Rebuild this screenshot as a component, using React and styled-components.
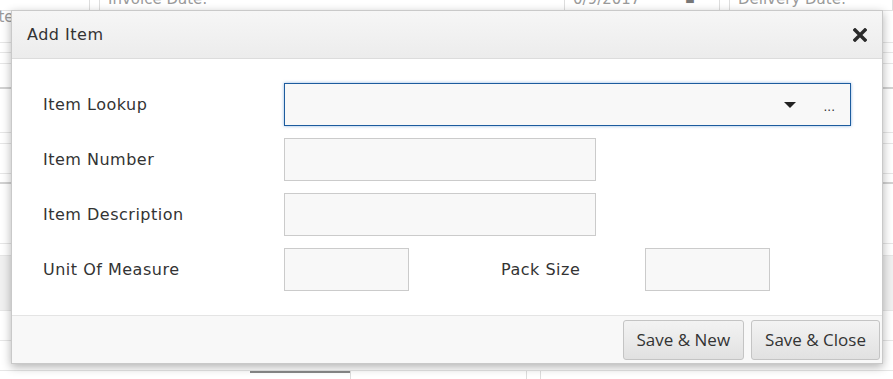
import React from 'react';
import styled, { createGlobalStyle } from 'styled-components';

const GlobalStyle = createGlobalStyle`
    html, body {
        margin: 0;
        padding: 0;
        background: #fff;
        overflow: hidden;
    }
    body {
        font-family: "DejaVu Sans", Verdana, sans-serif;
    }
`;

const bgRows = [
    { h: 32 }, { h: 10 }, { h: 11 }, { h: 25, dark: true }, { h: 44 }, { h: 11 },
    { h: 30 }, { h: 10, dark: true }, { h: 60 }, { h: 12 }, { h: 55, fill: true },
    { h: 30 }, { h: 30 },
];

const App = () => {
    return (
        <Screen>
            <GlobalStyle />
            <Page>
                <TopStrip>
                    <StripCell w={90} low>Item:</StripCell>
                    <StripCell w={10} />
                    <StripCell w={465} pad>Invoice Date:</StripCell>
                    <StripCell w={155} pad>0/9/2017 <Arrow>▬</Arrow></StripCell>
                    <StripCell w={10} />
                    <StripCell grow pad>Delivery Date:</StripCell>
                </TopStrip>
                <BgGrid>
                    {bgRows.map((r, i) => (
                        <BgRow key={i} h={r.h} dark={r.dark} fill={r.fill} />
                    ))}
                </BgGrid>
                <BottomStrip>
                    <BottomCell w={250} />
                    <BottomCell w={100} line />
                    <BottomCell w={175} sep />
                    <BottomCell w={13} sep />
                    <BottomCell grow sep />
                </BottomStrip>
            </Page>

            <Modal>
                <Header>
                    <Title>Add Item</Title>
                    <CloseButton aria-label="Close">
                        <svg width="14" height="14" viewBox="0 0 14 14">
                            <path d="M2 2 L12 12 M12 2 L2 12" stroke="#2b2b2b" strokeWidth="3.4" strokeLinecap="square" />
                        </svg>
                    </CloseButton>
                </Header>

                <Body>
                    <Label>Item Lookup</Label>
                    <Combo>
                        <Caret />
                        <Dots>...</Dots>
                    </Combo>

                    <Label>Item Number</Label>
                    <Field w={312} />

                    <Label>Item Description</Label>
                    <Field w={312} />

                    <Label>Unit Of Measure</Label>
                    <SplitRow>
                        <Field w={125} />
                        <SideLabel>Pack Size</SideLabel>
                        <Field w={125} />
                    </SplitRow>
                </Body>

                <Footer>
                    <Button>Save &amp; New</Button>
                    <Button>Save &amp; Close</Button>
                </Footer>
            </Modal>
        </Screen>
    );
};

const Screen = styled.div`
    position: relative;
    width: 893px;
    height: 379px;
    overflow: hidden;
    background: #fff;
`;

const Page = styled.div`
    display: flex;
    flex-direction: column;
    margin-top: -12px;
`;

const TopStrip = styled.div`
    display: flex;
    height: 22px;
    border-bottom: 1px solid #e2e2e2;
`;

const StripCell = styled.div`
    width: ${p => (p.w ? p.w + 'px' : 'auto')};
    flex: ${p => (p.grow ? 1 : 'none')};
    border-right: 1px solid #ddd;
    padding-left: ${p => (p.pad ? '8px' : '0')};
    text-indent: ${p => (p.low ? '-6px' : '0')};
    padding-top: ${p => (p.low ? '18px' : '0')};
    box-sizing: border-box;
    font-size: 15px;
    color: #9a9a9a;
    line-height: 22px;
    white-space: nowrap;
    overflow: ${p => (p.low ? 'visible' : 'hidden')};
`;

const Arrow = styled.span`
    margin-left: 40px;
    font-size: 10px;
    color: #777;
`;

const BgGrid = styled.div`
    display: flex;
    flex-direction: column;
`;

const BgRow = styled.div`
    height: ${p => p.h}px;
    box-sizing: border-box;
    border-bottom: ${p => (p.dark ? '2px solid #d2d2d2' : '1px solid #e6e6e6')};
    background: ${p => (p.fill ? '#f0f0f0' : 'transparent')};
`;

const BottomStrip = styled.div`
    display: flex;
    height: 24px;
`;

const BottomCell = styled.div`
    width: ${p => (p.w ? p.w + 'px' : 'auto')};
    flex: ${p => (p.grow ? 1 : 'none')};
    border-top: ${p => (p.line ? '2px solid #888' : 'none')};
    border-left: ${p => (p.sep ? '1px solid #ddd' : 'none')};
    border-bottom: 1px solid #ddd;
    height: 10px;
`;

const Modal = styled.div`
    position: absolute;
    top: 10px;
    left: 11px;
    width: 872px;
    height: 354px;
    display: flex;
    flex-direction: column;
    background: #fff;
    border: 1px solid #c9c9c9;
    box-sizing: border-box;
    box-shadow: 0 3px 9px rgba(0, 0, 0, 0.3);
`;

const Header = styled.div`
    height: 48px;
    flex: none;
    box-sizing: border-box;
    display: flex;
    align-items: center;
    justify-content: space-between;
    padding: 0 14px 0 15px;
    background: linear-gradient(#f6f6f6, #ececec);
    border-bottom: 1px solid #dcdcdc;
`;

const Title = styled.span`
    font-size: 16px;
    letter-spacing: 0.5px;
    color: #333;
`;

const CloseButton = styled.div`
    display: flex;
    align-items: center;
    justify-content: center;
    width: 16px;
    height: 16px;
`;

const Body = styled.div`
    flex: 1;
    display: grid;
    grid-template-columns: 241px 1fr;
    grid-auto-rows: 43px;
    row-gap: 12px;
    align-items: center;
    padding: 24px 31px 0 31px;
`;

const Label = styled.span`
    font-size: 16px;
    letter-spacing: 0.5px;
    color: #333;
`;

const Field = styled.div`
    width: ${p => p.w}px;
    height: 43px;
    box-sizing: border-box;
    background: #f8f8f8;
    border: 1px solid #cbcbcb;
`;

const Combo = styled.div`
    height: 43px;
    box-sizing: border-box;
    background: #f8f8f8;
    border: 1px solid #1d5c9e;
    box-shadow: 0 0 3px rgba(53, 120, 200, 0.55);
    display: flex;
    align-items: center;
    justify-content: flex-end;
    padding-right: 15px;
`;

const Caret = styled.span`
    width: 0;
    height: 0;
    border-left: 6px solid transparent;
    border-right: 6px solid transparent;
    border-top: 6px solid #222;
    margin-right: 28px;
`;

const Dots = styled.span`
    font-size: 12px;
    color: #333;
    margin-top: 4px;
`;

const SplitRow = styled.div`
    display: flex;
    align-items: center;
`;

const SideLabel = styled.span`
    font-size: 16px;
    letter-spacing: 0.5px;
    color: #333;
    margin-left: 92px;
    width: 144px;
`;

const Footer = styled.div`
    height: 48px;
    flex: none;
    box-sizing: border-box;
    display: flex;
    align-items: center;
    justify-content: flex-end;
    gap: 7px;
    padding-right: 2px;
    background: #f8f8f8;
    border-top: 1px solid #e4e4e4;
`;

const Button = styled.button`
    height: 40px;
    padding: 0 13px;
    font-family: "Open Sans", "Noto Sans", sans-serif;
    font-size: 17px;
    color: #333;
    background: linear-gradient(#f3f3f3, #e1e1e1);
    border: 1px solid #c4c4c4;
    border-radius: 3px;
`;

export default App;
